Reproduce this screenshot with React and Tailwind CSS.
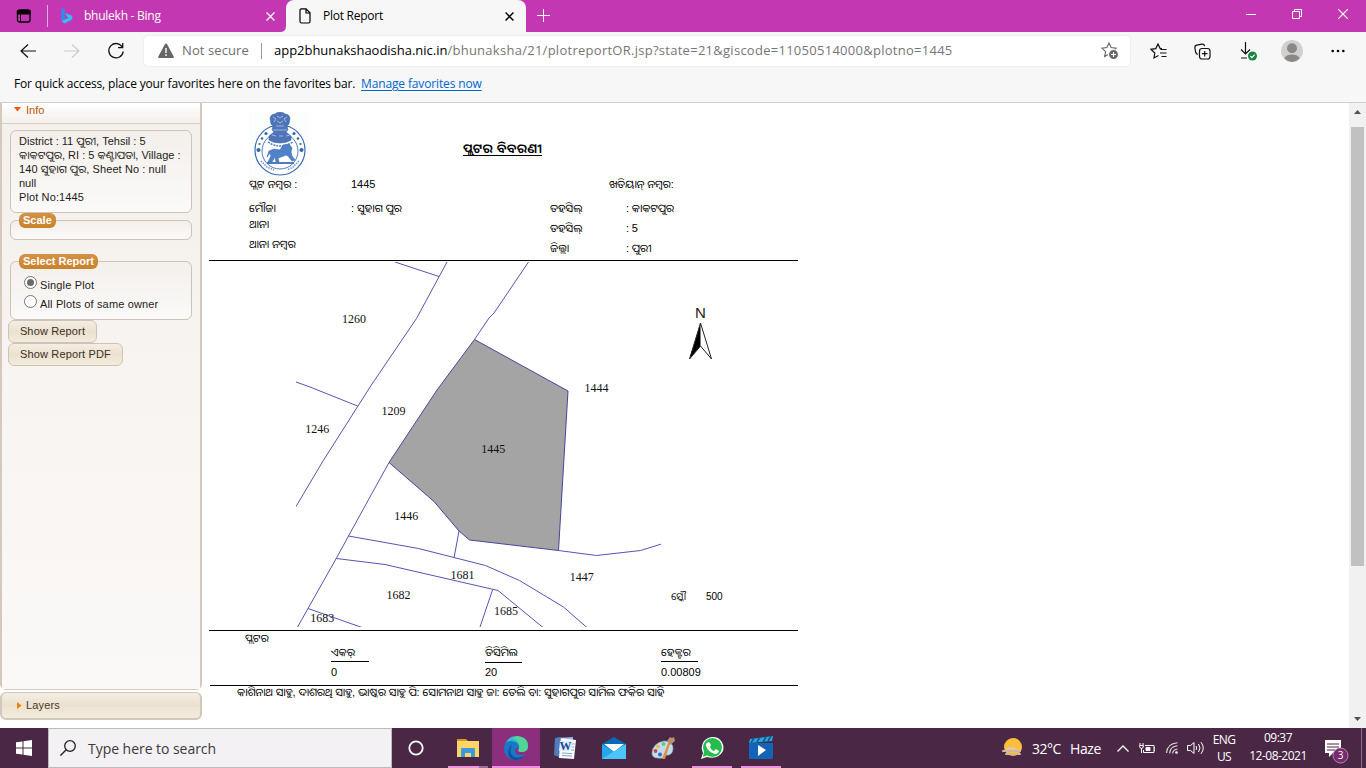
import React from "react";

const UI = "font-['Open_Sans','Noto_Sans',sans-serif]";
const ARIAL = "font-['Liberation_Sans','Noto_Sans_Oriya','Noto_Sans',sans-serif]";

function TabBar() {
  return (
    <div className="flex h-8 bg-[#c337b2] text-white">
      <div className="flex h-8 w-[286px] items-center">
        <svg className="ml-4 h-4 w-4" viewBox="0 0 16 16" fill="none" stroke="#000" strokeWidth="1.3">
          <rect x="1.500" y="2" width="12.500" height="12" rx="2" />
          <path d="M1.500 2.800h12.500v3h-12.500z" fill="#000" />
          <path d="M4.500 6v8" strokeWidth="1" />
        </svg>
        <div className="ml-[15px] h-[22px] w-px bg-[#e7a9de]" />
        <svg className="ml-[13px] h-4 w-3" viewBox="0 0 12 16">
          <path d="M.5 0l3.300 1.200v10.300l-3.300 2z" fill="#2b8df0" />
          <path d="M.5 13.500l3.300-2 3.800-2-2-1-1.100-3.500 5.500 2.300q1.500.7 1.500 2.200 0 1.500-1.500 2.500l-6.200 3.500z" fill="#35bdf3" />
        </svg>
        <span className="ml-[11px] w-[140px] text-xs tracking-[-0.25px]">bhulekh - Bing</span>
        <svg className="ml-[42px] h-[9px] w-[9px]" viewBox="0 0 8 8" stroke="#fff" strokeWidth="1.1"><path d="M.5 .5l7 7M7.500 .5l-7 7" /></svg>
      </div>
      <div className="flex h-8 w-[240px] items-center rounded-t-lg bg-[#f7f7f7] text-black">
        <svg className="ml-[-7px] h-8 w-[7px] self-end" viewBox="0 0 7 32"><path d="M7 26v6H1q6 0 6-6" fill="#f7f7f7" /></svg>
        <svg className="ml-[13px] h-4 w-3" viewBox="0 0 12 16" fill="none" stroke="#000" strokeWidth="1.2">
          <path d="M2.500 .8H7l4 4v8.700q0 1.500-1.500 1.500h-7Q1 15 1 13.500v-11Q1 .8 2.500 .8zM7 .8V5h4" />
        </svg>
        <span className="ml-3 w-[150px] text-xs tracking-[-0.25px]">Plot Report</span>
        <svg className="ml-8 h-[9px] w-[9px]" viewBox="0 0 8 8" stroke="#000" strokeWidth="1.3"><path d="M.5 .5l7 7M7.500 .5l-7 7" /></svg>
      </div>
      <svg className="ml-[11px] mt-[9px] h-[13px] w-[13px]" viewBox="0 0 13 13" stroke="#fff"><path d="M6.500 0v13M0 6.500h13" /></svg>
      <div className="ml-auto flex w-[120px] pt-[9px]">
        <svg className="h-[10px] w-[10px]" viewBox="0 0 10 10" stroke="#fff"><path d="M0 5.500h10" /></svg>
        <svg className="ml-9 h-[10px] w-[10px]" viewBox="0 0 10 10" fill="none" stroke="#fff"><path d="M.5 2.500h7v7h-7zM2.500 2.500v-2h7v7h-2" /></svg>
        <svg className="ml-9 h-[10px] w-[10px]" viewBox="0 0 10 10" stroke="#fff" strokeWidth="1.2"><path d="M0 0l10 10M10 0L0 10" /></svg>
      </div>
    </div>
  );
}

const STAR = "M8 1l2.1 4.600 5 .6-3.700 3.400 1 5L8 12.100 3.600 14.600l1-5L.9 6.200l5-.6z";

function Toolbar() {
  return (
    <div className="flex h-[38px] items-center bg-[#f7f7f7]">
      <svg className="ml-5 h-4 w-4" viewBox="0 0 16 16" fill="none" stroke="#111" strokeWidth="1.200"><path d="M16 8H1M8 1.500L1 8l7 6.500" /></svg>
      <svg className="ml-7 h-4 w-4" viewBox="0 0 16 16" fill="none" stroke="#ccc" strokeWidth="1.200"><path d="M0 8h15M8 1.500L15 8l-7 6.500" /></svg>
      <svg className="ml-[27px] h-[18px] w-[18px]" viewBox="0 0 18 18" fill="none" stroke="#111" strokeWidth="1.300">
        <path d="M15.500 5.500A7.200 7.200 0 1 0 16.200 9.500M15.700 1v4.700H11" />
      </svg>
      <div className="ml-[19px] flex h-[30px] w-[986px] items-center rounded bg-white shadow-[0_0_2px_rgba(0,0,0,0.12)]">
        <svg className="ml-[14px] h-4 w-4" viewBox="0 0 16 16">
          <path d="M8 .5q.7 0 1 .6l6.800 12.700q.4 1.200-.8 1.200H1q-1.200 0-.8-1.200L7 1.100q.3-.6 1-.6z" fill="#666" />
          <path d="M8 5v5M8 11.300v1.700" stroke="#fff" strokeWidth="1.400" />
        </svg>
        <span className="ml-2 w-[79px] whitespace-nowrap text-[13px] tracking-[0.1px] text-[#6e6e6e]">Not secure</span>
        <div className="h-4 w-px bg-[#999]" />
        <span className="ml-3 w-[790px] whitespace-nowrap text-[13px] text-[#767676]">
          <span className="text-black tracking-[-0.02px]">app2bhunakshaodisha.nic.in</span>
          <span className="tracking-[0.27px]">/bhunaksha/21/plotreportOR.jsp?state=21&amp;giscode=11050514000&amp;plotno=1445</span>
        </span>
        <svg className="ml-[37px] h-[18px] w-[18px]" viewBox="0 0 18 18" fill="none" stroke="#666" strokeWidth="1.100">
          <path d={STAR} /><circle cx="12.500" cy="12.500" r="5" fill="#666" stroke="#fff" /><path d="M12.500 10v5M10 12.500h5" stroke="#fff" />
        </svg>
      </div>
      <svg className="ml-5 h-[17px] w-[17px]" viewBox="0 0 17 17" fill="none" stroke="#111" strokeWidth="1.200">
        <path d="M8.500 12.500L4 15l.8-5L1 6.300l4.800-.7L8 1l2.200 4.600H12M10.500 6.500h6M10 10h6.500M11.500 13.500h5" />
      </svg>
      <svg className="ml-[27px] h-[17px] w-[17px]" viewBox="0 0 17 17" fill="none" stroke="#111" strokeWidth="1.200">
        <rect x="5.500" y="5.500" width="10.500" height="10.500" rx="2.500" /><path d="M10.700 8v5.500M8 10.700h5.500M3.800 11.500Q2 10.800 1.600 9L.9 4.800Q.7 2.700 2.700 2.200L8 1.100q2-.3 2.700 2" />
      </svg>
      <svg className="ml-[29px] h-5 w-[18px]" viewBox="0 0 18 20" fill="none" stroke="#111" strokeWidth="1.200">
        <path d="M5.500 1v12M1 8.500L5.500 13 10 8.500M1 17h6" /><circle cx="12.500" cy="15" r="4.500" fill="#168342" stroke="none" /><path d="M10.300 15l1.600 1.600 2.800-3" stroke="#fff" />
      </svg>
      <svg className="ml-[23px] h-[22px] w-[22px]" viewBox="0 0 22 22">
        <circle cx="11" cy="11" r="11" fill="#d2d0ce" /><circle cx="11" cy="8.300" r="5" fill="#8a8886" /><path d="M3.300 18.500Q5 14.500 11 14.500t7.700 4Q15 22 11 22T3.300 18.500z" fill="#8a8886" />
      </svg>
      <svg className="ml-7 h-1 w-[14px]" viewBox="0 0 14 4"><circle cx="1.700" cy="2" r="1.300" /><circle cx="7" cy="2" r="1.300" /><circle cx="12.300" cy="2" r="1.300" /></svg>
    </div>
  );
}

function Legend({ children }) {
  return (
    <legend className="ml-2 rounded-md bg-linear-to-b from-[#d49145] to-[#c9832b] px-1 text-[11px] leading-[15px] font-bold text-white">{children}</legend>
  );
}

const BOX = "mx-2 rounded-md border border-[#cdc3b7] bg-linear-to-b from-[#f3efeb] to-[#fbfaf9]";
const BUTTON = "block h-[23px] rounded-md border border-[#cdc3b7] bg-linear-to-b from-[#f4eee4] via-[#ece1cf] to-[#f3ecdd] text-[11px] tracking-[0.15px] text-[#3a3025]";

function Sidebar() {
  return (
    <div className={`flex h-full w-[202px] flex-col text-[11px] text-[#1f1a17] ${ARIAL}`}>
      <div className="flex h-[587px] flex-col rounded-b-md border-x-2 border-b border-[#d5c8bd] bg-[#f4f0eb]">
        <div className="flex h-[21px] items-start border-b border-[#d9cfc5] bg-linear-to-b from-white to-[#f4f0ec] text-[#b85700]">
          <svg className="ml-3 mt-1 h-[5px] w-[7px]" viewBox="0 0 7 5"><path d="M0 0h7L3.500 4.500z" fill="#f35a00" /></svg>
          <span className="ml-[5px] leading-[15px]">Info</span>
        </div>
        <div className="flex h-[565px] flex-col bg-linear-to-b from-[#f4f0ec] to-[#fbf9f7] px-0 pt-[6px]">
          <div className={`${BOX} h-[83px] w-[182px] overflow-hidden pl-2 pt-[3px] leading-[14px] whitespace-nowrap`}>
            <div>District : 11 ପୁରୀ, Tehsil : 5</div>
            <div className="tracking-[0.02px]">କାକଟପୁର, RI : 5 କଣ୍ଟାପଡା, Village :</div>
            <div className="tracking-[0.08px]">140 ସୁହାଗ ପୁର, Sheet No : null</div>
            <div>null</div>
            <div className="tracking-[0.12px]">Plot No:1445</div>
          </div>
          <fieldset className={`${BOX} h-[27px] w-[182px]`}><Legend>Scale</Legend></fieldset>
          <fieldset className={`${BOX} mt-[14px] h-[66px] w-[182px]`}>
            <Legend>Select Report</Legend>
            <div className="flex pl-[13px] pt-[7px]">
              <span className="flex h-[13px] w-[13px] items-center justify-center rounded-full border border-[#767676] bg-white"><span className="h-[7px] w-[7px] rounded-full bg-[#6b6b6b]" /></span>
              <span className="ml-[3px] pt-[3px] leading-[13px] tracking-[0.15px]">Single Plot</span>
            </div>
            <div className="flex pl-[13px] pt-[3px]">
              <span className="h-[13px] w-[13px] rounded-full border border-[#767676] bg-white" />
              <span className="ml-[3px] pt-[3px] leading-[13px] tracking-[0.15px]">All Plots of same owner</span>
            </div>
          </fieldset>
          <button className={`${BUTTON} ml-[6px] w-[89px]`}>Show Report</button>
          <button className={`${BUTTON} ml-[6px] w-[115px]`}>Show Report PDF</button>
        </div>
      </div>
      <div className="mt-[2px] flex h-7 items-center rounded-md border-2 border-t border-[#d1c7ba] bg-linear-to-b from-[#f4eee4] via-[#ece1cf] to-[#f3ecdd]">
        <svg className="ml-[15px] h-[7px] w-[5px]" viewBox="0 0 5 7"><path d="M0 0v7l4.500-3.500z" fill="#f08000" /></svg>
        <span className="ml-1 text-[11px] tracking-[0.15px] text-[#4a3b29]">Layers</span>
      </div>
    </div>
  );
}

function Emblem() {
  return (
    <svg className="h-[64px] w-[60px]" viewBox="0 0 60 64" fill="none" stroke="#3d6cb5">
      <path d="M0 0h60v64H0z" fill="#fcfdfd" stroke="none" />
      <circle cx="31" cy="38" r="25" strokeWidth="1.200" fill="#fff" /><circle cx="31" cy="39" r="18" strokeWidth=".9" />
      <path d="M21 6q1-4 5-4 2-2 5-2t5 2q4 0 5 4l-1 6-2 2 1 4-2 2 5 4v4q-4 3-11 3t-11-3v-4l5-4-2-2 1-4-2-2z" fill="#4f75b8" strokeWidth=".6" />
      <path d="M24 5l3 2-2 3m13-5l-3 2 2 3m-9-6l3 2 3-2m-6 5l3 2 3-2m-7 5h8m-11 4h14m-15 5l4 1m3 0h4m3 0l4-1" stroke="#a9bde2" strokeWidth=".9" />
      <path d="M19 30q6 4 12 4t13-4" strokeWidth="1.300" strokeDasharray="2 1" />
      <path d="M20 39l5-2 6 1 3-5 6-1 3 4-1 4 1 4 3 4-3 1-4-5-2-1-5 2-3 1 1 4h-3l-1-5-3 5h-4l3-6-1-3-3 4z" fill="#4f82c8" strokeWidth=".6" />
      <path d="M18 51h27" strokeWidth="1.800" />
      <path d="M12 49l6 6 7 3M50 49l-6 6-6 3" strokeWidth="1.600" stroke="#7d9bce" strokeDasharray="1.500 1" />
      <g fill="#3766b0" stroke="none"><circle cx="9.500" cy="38" r="2.100" /><circle cx="52.500" cy="38" r="2.100" /><circle cx="10.500" cy="32" r="1.100" /><circle cx="17" cy="21.500" r="1.600" /><circle cx="51.500" cy="32" r="1.100" /><circle cx="45" cy="21.500" r="1.600" /><circle cx="13" cy="26.500" r="1.300" /><circle cx="49" cy="26.500" r="1.300" /></g>
    </svg>
  );
}

const LABELS = [
  ["1260", 354, 323], ["1209", 393.500, 414.500], ["1246", 317.300, 432.500], ["1444", 596.500, 392],
  ["1445", 493.300, 453], ["1446", 406.300, 519.500], ["1681", 462.500, 578.500], ["1447", 581.800, 581.300],
  ["1682", 398.500, 598.700], ["1683", 322.300, 621.700], ["1685", 506, 614.700],
];

function PlotMap() {
  return (
    <svg className="ml-[87px] h-[365px] w-[365px]" viewBox="296 262 365 365" fill="none" stroke="#5555b2" strokeWidth="1">
      <path d="M474.500 339.500L568 391l-9.500 159.500-89-10.500-10.500-9-25-29.500-45-39L437 390z" fill="#a4a4a4" stroke="#4646a0" />
      <path d="M395 262l44 14.500M447 262l-30.500 56.500-45.500 67L323 461l-27 45.500M528.500 262L494 313l-5 5-14.500 21.500M296 382l14 5 47.500 19M389 462.500L348.500 536l-12 22-39.500 70M348.500 536l70 12.500 67 17 34 15 44 26.500 24 21M459 531l-5 27M336.500 558.500l48.500 6 113 26 45 37M492.500 590L480 627M308 608.500l54 19M558.500 550.500l38 5 44-5 21-6.500" />
      <g fill="#111" stroke="none" textAnchor="middle" className="font-['Liberation_Serif',serif] text-xs">
        {LABELS.map(([t, x, y]) => <text key={t} x={x} y={y}>{t}</text>)}
      </g>
    </svg>
  );
}

function Report() {
  return (
    <div className={`ml-[7px] flex w-[589px] flex-col text-[11px] whitespace-nowrap text-black ${ARIAL}`}>
      <div className="flex h-[72px] items-start pl-10 pt-[9px]">
        <Emblem />
        <div className="ml-[154px] mt-[25px] text-[13px] leading-6 font-semibold tracking-[0.28px] underline underline-offset-2">ପ୍ଲଟର ବିବରଣୀ</div>
      </div>
      <div className="flex h-[18px] pl-10 leading-[18px]">
        <span className="w-[102px]">ପ୍ଲଟ ନମ୍ବର :</span><span className="w-[258px]">1445</span><span className="tracking-[-0.08px]">ଖତିୟାନ୍ ନମ୍ବର:</span>
      </div>
      <div className="flex h-[67px] pl-10">
        <div className="w-[102px] pt-[7px]"><div className="h-4 leading-4">ମୌଜା</div><div className="h-[18px] leading-4">ଥାନା</div><div className="leading-5">ଥାନା ନମ୍ବର</div></div>
        <div className="w-[199px] pt-[7px] leading-4 tracking-[-0.08px]">: ସୁହାଗ ପୁର</div>
        <div className="w-[76px] pt-[5px] leading-5 tracking-[-0.1px]"><div>ତହସିଲ୍</div><div>ତହସିଲ୍</div><div>ଜିଲ୍ଲା</div></div>
        <div className="pt-[5px] leading-5 tracking-[-0.15px]"><div>: କାକଟପୁର</div><div>: 5</div><div>: ପୁରୀ</div></div>
      </div>
      <div className="flex h-[371px] border-y border-black pt-px">
        <PlotMap />
        <div className="flex flex-col">
          <svg className="ml-[27px] mt-[43px] h-[58px] w-[26px]" viewBox="0 0 26 58">
            <path d="M12.500 18L1.500 54l11-13z" fill="#000" /><path d="M12.500 18l11 36-11-13L1.500 54z" fill="none" stroke="#222" strokeWidth="1" />
            <text x="12.500" y="13" textAnchor="middle" className="font-['Liberation_Sans',sans-serif] text-[15px]" fill="#222">N</text>
          </svg>
          <div className="mt-[226px] ml-[10px] flex text-[10px] leading-4"><span className="w-[35px]">ସ୍କୌ</span><span>500</span></div>
        </div>
      </div>
      <div className="h-[13px] pl-9 leading-[14px]">ପ୍ଲଟର</div>
      <div className="flex h-[41px] pl-[122px]">
        <div className="w-[154px]"><div className="h-[18px] w-[38px] border-b border-black leading-4">ଏକର୍</div><div className="pt-[2px] leading-4">0</div></div>
        <div className="w-[176px]"><div className="h-[19px] w-[37px] border-b border-black leading-4 tracking-[-0.1px]">ଡିସିମିଲ</div><div className="pt-px leading-4">20</div></div>
        <div><div className="h-[18px] w-[37px] border-b border-black leading-4">ହେକ୍ଟର</div><div className="pt-[2px] leading-4">0.00809</div></div>
      </div>
      <div className="ml-px border-t border-black pl-[27px] leading-[13px] tracking-[-0.13px]">କାଶିନାଥ ସାହୁ, ଦାଶରଥି ସାହୁ, ଭାଷ୍କର ସାହୁ ପି: ସୋମନାଥ ସାହୁ ଜା: ତେଲି ବା: ସୁହାଗପୁର ସାମିଲ ଫକିର ସାହି</div>
    </div>
  );
}

function Scrollbar() {
  return (
    <div className="ml-auto flex w-[17px] flex-col items-center bg-[#f1f1f1] pt-[7px]">
      <svg className="h-1 w-[7px]" viewBox="0 0 7 4"><path d="M0 4h7L3.500 0z" fill="#505050" /></svg>
      <div className="mt-[13px] h-[439px] w-[13px] bg-[#c1c1c1]" />
      <svg className="mt-auto mb-[7px] h-1 w-[7px]" viewBox="0 0 7 4"><path d="M0 0h7L3.500 4z" fill="#505050" /></svg>
    </div>
  );
}

function TaskItem({ className = "", bar = "", children }) {
  return (
    <div className={`flex h-10 w-12 flex-col items-center ${className}`}>
      <svg className="mt-2 h-6 w-6" viewBox="0 0 24 24">{children}</svg>
      <div className={`mt-auto h-[2px] ${bar}`} />
    </div>
  );
}

function Taskbar() {
  return (
    <div className={`flex h-10 bg-[#4a2745] text-white ${UI}`}>
      <div className="flex w-12 items-center justify-center">
        <svg className="h-4 w-4" viewBox="0 0 16 16" fill="#fff"><path d="M0 2.300L6.500 1.400v6.100H0zM7.500 1.200L16 0v7.500H7.500zM0 8.500h6.500v6.100L0 13.700zM7.500 8.500H16V16l-8.500-1.200z" /></svg>
      </div>
      <div className="flex w-[344px] items-center border border-[#bcbcbc] bg-[#f3f1f3] text-[#3b3b3b]">
        <svg className="ml-[11px] h-4 w-4" viewBox="0 0 16 16" fill="none" stroke="#222" strokeWidth="1.300"><circle cx="10" cy="6" r="5.300" /><path d="M6.200 9.800L.4 15.600" /></svg>
        <span className="ml-3 whitespace-nowrap text-[14px] tracking-[-0.04px]">Type here to search</span>
      </div>
      <TaskItem><circle cx="12" cy="12" r="6.700" fill="none" stroke="#fff" strokeWidth="1.800" /></TaskItem>
      <div className="w-[3px]" />
      <TaskItem className="!w-[49px]" bar="w-10 bg-linear-to-r from-[#ed93dc] from-78% to-[#a36b9c] to-78%">
        <path d="M1 3h9l2 2h9v5H1z" fill="#dc9810" /><path d="M1 5h22v16H1z" fill="#ffd568" /><path d="M5 13q0-1 1-1h12q1 0 1 1v8h-4v-4H9v4H5z" fill="#3c9ad8" />
      </TaskItem>
      <TaskItem className="bg-[#8b2f7d]" bar="w-12 bg-[#f28adf]">
        <path d="M1 10Q3 0 13 0q11 1 11 10 0 6-7 6-4 0-2-4 0-6-7-5-4 1-7 3z" fill="#35b9ce" /><path d="M13 0q11 1 11 10 0 6-7 6-4 0-2-3 2-8-7-11z" fill="#51d596" />
        <path d="M0 13q0-8 7-8 8 0 8 7-3-1-4 2 0 5 6 5 3 0 5-1-5 6-10 6Q1 24 0 13z" fill="#1977c8" /><path d="M8 9q-4 8 2 12 5 2 11-2-5 6-11 5-6-2-6-8 1-5 4-7z" fill="#12509e" />
      </TaskItem>
      <TaskItem className="ml-px"><path d="M3 2l17-1v20L2 19z" fill="#9db8df" /><path d="M6 2l17 2-2 19-15-1z" fill="#f8fafc" /><path d="M2 2l6-1-2 20-5-2z" fill="#4d7dbd" /><path d="M7 5h11l-1 10H6z" fill="#e4edf8" /><text x="6.500" y="14" fill="#174d9b" className="font-['Liberation_Serif',serif] text-[12px] font-bold">W</text><path d="M9 17l10 .6M9 19.500l10 .6" stroke="#84a5ce" /><path d="M18.500 8h3M18.300 11h3M18 14h3" stroke="#84a5ce" /></TaskItem>
      <TaskItem className="ml-px"><path d="M0 8l12-7 12 7v15H0z" fill="#0869ba" /><path d="M2 8h20L12 16z" fill="#fff" /><path d="M0 8l12 8L24 8v15H0z" fill="#24a7ec" /><path d="M24 8L0 23h24z" fill="#4bc5f7" /></TaskItem>
      <TaskItem className="ml-px"><path d="M1 17q1-10 12-12 9 0 9 8-1 7-7 6-2 4-8 3-6 0-6-5z" fill="#bddef2" stroke="#8fb3ca" strokeWidth=".6" /><circle cx="7" cy="10.500" r="1.900" fill="#e7b94d" /><circle cx="12.500" cy="8" r="1.900" fill="#6dc277" /><circle cx="4.500" cy="15" r="1.900" fill="#c94936" /><circle cx="9" cy="18.500" r="2" fill="#3c68b6" /><path d="M11 23l6-16 2 1-5 15z" fill="#e78d36" /><path d="M16 5l3-4 2 1 2-1 1 4-5 4z" fill="#b9906c" /></TaskItem>
      <TaskItem className="ml-px" bar="w-10 bg-[#ed93dc]"><path d="M1 23l2-6Q0 11 4 5q6-6 14-3 7 5 5 13-5 9-16 6z" fill="#fff" /><circle cx="12.500" cy="11.500" r="9.500" fill="#25bd4b" /><path d="M3 21l1-6 4 4z" fill="#25bd4b" /><path d="M9 6l2 3-1 2q1 3 4 4l2-2 3 2q-1 3-4 3-7-2-9-8-1-3 3-4z" fill="#fff" /></TaskItem>
      <TaskItem className="ml-px" bar="w-10 bg-[#ed93dc]"><path d="M0 7l1-4 23-3-1 5z" fill="#26a7df" /><path d="M5 2L2 7M11 1L8 6M17 1l-3 5M22 0l-3 5" stroke="#0e5791" strokeWidth="1.500" /><path d="M0 7h24v15q0 1-1 1H1q-1 0-1-1z" fill="#1264b8" /><path d="M9 9v11l8-6z" fill="#fff" /></TaskItem>
      <div className="ml-auto flex w-[364px] items-center">
        <svg className="h-5 w-5" viewBox="0 0 20 20"><circle cx="11" cy="9" r="9" fill="#ffbd38" /><path d="M4 11q1-3 5-2 3-2 5 2 5-1 5 2H3z" fill="#e7c895" /><path d="M1 13h17M4 16h14" stroke="#d3b69b" strokeWidth="2" strokeLinecap="round" /></svg>
        <span className="ml-[10px] w-[38px] whitespace-nowrap text-[14px] tracking-[-0.5px]">32°C</span>
        <span className="w-[47px] text-[14px] tracking-[-0.4px]">Haze</span>
        <svg className="h-[7px] w-3" viewBox="0 0 12 7" fill="none" stroke="#fff" strokeWidth="1.300"><path d="M.5 6.500L6 1l5.500 5.500" /></svg>
        <svg className="ml-[10px] h-[11px] w-4" viewBox="0 0 16 11" fill="none" stroke="#fff"><path d="M6 2.500h9v7H4.500V7M15 4.500h1v3h-1M1 0v2M4 0v2M.5 2.500h4q0 3-2 3t-2-3M2.500 5v5" /><path d="M7 4.500h4v3H7z" fill="#fff" /></svg>
        <svg className="ml-[11px] h-3 w-3" viewBox="0 0 12 12" fill="none" stroke="#ddd" strokeWidth="1.100"><path d="M.6 11Q1 1.500 11.500.7M3.600 11.400Q4 4.500 11.500 3.800M6.600 11.500Q7 7.500 11.500 7" /><circle cx="10.500" cy="10.500" r="1.300" fill="#fff" stroke="none" /></svg>
        <svg className="ml-[9px] h-[14px] w-[17px]" viewBox="0 0 17 14" fill="none" stroke="#fff"><path d="M.5 4.500h3L7 1.500v11L3.500 9.500h-3zM9 5q1.500 2 0 4M11.500 3q3 4 0 8M14 1.200q4.500 5.800 0 11.600" /></svg>
        <div className="ml-[6px] w-[28px] pb-px text-center text-xs leading-[17px] tracking-[-0.6px]"><div>ENG</div><div>US</div></div>
        <div className="ml-[8px] w-[64px] pb-[2px] text-center text-xs leading-[18px] tracking-[-0.5px] whitespace-nowrap"><div>09:37</div><div>12-08-2021</div></div>
        <svg className="ml-[15px] mt-2 h-6 w-6" viewBox="0 0 24 24"><path d="M0 0h16v13H8l-4 4v-4H0z" fill="#fff" /><path d="M2 4h12M2 7h12M2 10h8" stroke="#4a2745" /><circle cx="15.500" cy="15.500" r="7.500" fill="#7c2a70" stroke="#b286ad" /><text x="15.500" y="19" textAnchor="middle" fill="#fff" className="text-[10px]">3</text></svg>
        <div className="ml-auto mr-1 h-10 w-px bg-[#8a6f88]" />
      </div>
    </div>
  );
}

export default function App() {
  return (
    <div className="flex h-[768px] w-[1366px] flex-col overflow-hidden bg-white">
      <div className={UI}>
        <TabBar />
        <Toolbar />
        <div className="flex h-[33px] items-start border-b border-[#cfcfcf] bg-[#f7f7f7] pl-[14px] pt-[6px] text-xs leading-4 whitespace-nowrap text-black">
          <span className="w-[347px] tracking-[-0.16px]">For quick access, place your favorites here on the favorites bar.</span>
          <span className="tracking-[-0.14px] text-[#0066cc] underline underline-offset-2">Manage favorites now</span>
        </div>
      </div>
      <div className="flex h-[625px] overflow-hidden">
        <Sidebar />
        <Report />
        <Scrollbar />
      </div>
      <Taskbar />
    </div>
  );
}
